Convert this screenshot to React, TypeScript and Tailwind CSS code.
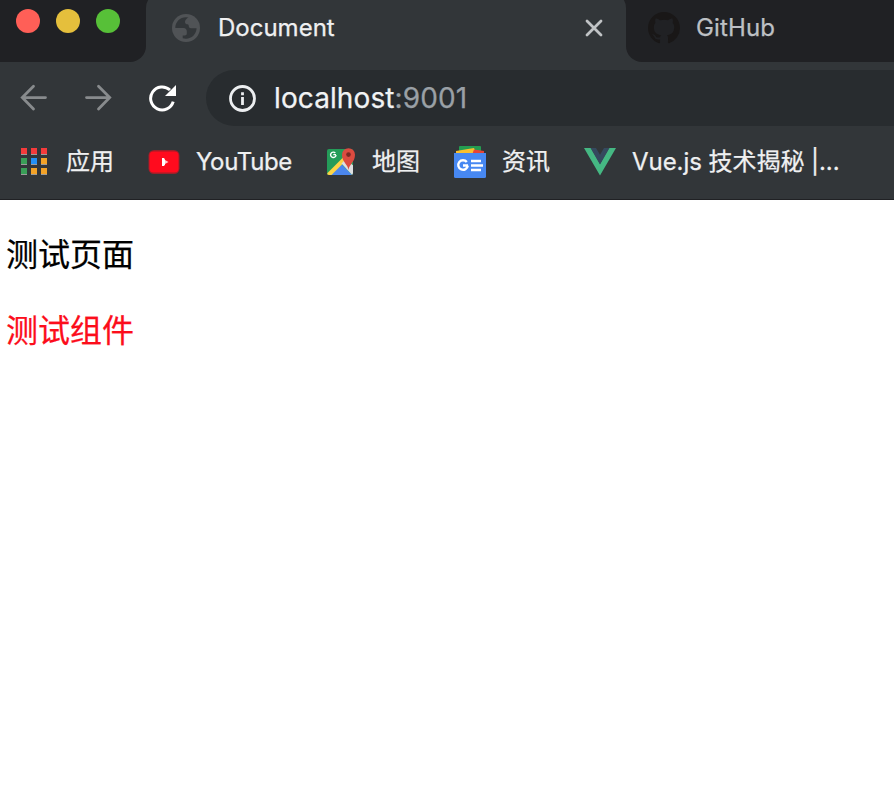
import React from "react";

const TrafficLights = () => (
  <div className="flex h-[62px] w-[146px] shrink-0 gap-4 rounded-br-[16px] bg-[#202124] pl-4 pt-[9px]">
    <span className="size-6 rounded-full bg-[#ff5f57]" />
    <span className="size-6 rounded-full bg-[#e5bf3c]" />
    <span className="size-6 rounded-full bg-[#57c038]" />
  </div>
);

const Globe = () => (
  <svg width="28" height="28" viewBox="0 0 28 28" className="shrink-0">
    <circle cx="14" cy="14" r="14" fill="#505356" />
    <path
      d="M3.300 14C3.300 8 8 3.300 14 3.300L16.500 3.500C14.500 4.500 13 6 13 8c0 1.500 1.200 2.300 2.500 2.300 1 0 1.300 1 1.300 2 0 1.200 1 2 2.200 2h5.600c-.2 5.800-4.800 10.400-10.600 10.400-1.200 0-2.300-.2-3.300-.5v-2.700h2.100c1.200 0 2-.8 2-2v-2.200c0-1.700-1.300-3.300-3.200-3.300z"
      fill="#323639"
    />
  </svg>
);

const GitHubMark = () => (
  <svg width="32" height="32" viewBox="0 0 16 16" className="shrink-0" fill="#191717">
    <path d="M8 0C3.580 0 0 3.580 0 8c0 3.540 2.290 6.530 5.470 7.590.4.070.55-.17.55-.38 0-.19-.01-.82-.01-1.490-2.010.37-2.530-.49-2.690-.94-.09-.23-.48-.94-.82-1.130-.28-.15-.68-.52-.01-.53.63-.01 1.080.58 1.230.82.72 1.210 1.870.87 2.330.66.07-.52.28-.87.51-1.070-1.780-.2-3.640-.89-3.640-3.950 0-.87.31-1.590.82-2.150-.08-.2-.36-1.020.08-2.120 0 0 .67-.21 2.200.82.64-.18 1.320-.27 2-.27s1.360.09 2 .27c1.530-1.040 2.200-.82 2.200-.82.44 1.100.16 1.920.08 2.120.51.56.82 1.270.82 2.150 0 3.070-1.870 3.750-3.650 3.950.29.25.54.73.54 1.480 0 1.070-.01 1.930-.01 2.200 0 .21.15.46.55.38A8.010 8.010 0 0 0 16 8c0-4.420-3.580-8-8-8z" />
  </svg>
);

const YouTubeIcon = () => (
  <svg width="32" height="24" viewBox="0 0 32 24" className="ml-[34px] shrink-0">
    <rect x=".5" width="31" height="24" rx="5.500" fill="#9f1f29" />
    <rect x="1.500" y="1.500" width="29" height="21" rx="4" fill="#ff0b1e" />
    <path d="M14 8h2l1 1.500V14.500L16 16h-2z" fill="#fff" />
    <path d="M17 10l3.500 2-3.500 2z" fill="#ffc9cc" />
  </svg>
);

const MapsIcon = () => (
  <svg width="30" height="32" viewBox="0 0 30 32" className="ml-[34px] shrink-0">
    <defs>
      <clipPath id="map-sheet">
        <rect x="1" y="3" width="26" height="26" rx="2" />
      </clipPath>
    </defs>
    <g clipPath="url(#map-sheet)">
      <rect x="1" y="3" width="26" height="26" fill="#249c59" />
      <path d="M2 31L15 17.500 28 31z" fill="#4b87ee" />
      <path d="M0 28.500L20 8.500l3 3L3.500 31z" fill="#fcd445" />
      <path d="M15.500 17.500l4-4L28 20v11z" fill="#dedfe1" />
    </g>
    <path d="M10 8.600H7.300M9.300 7A2.700 2.700 0 1 0 10 8.900" fill="none" stroke="#fff" strokeWidth="1.400" />
    <path d="M22.500 24c-.6-5.500-6.500-8-6.500-15.300a6.500 6.500 0 0 1 13 0C29 16 23.100 18.500 22.500 24z" fill="#dc4b40" />
    <circle cx="22.500" cy="8.600" r="2.300" fill="#7c2823" />
  </svg>
);

const NewsIcon = () => (
  <svg width="32" height="32" viewBox="0 0 32 32" className="ml-[34px] shrink-0">
    <rect x="5" width="22" height="9" rx="1" fill="#249c50" />
    <path d="M2 5l18-3 3 7H2z" fill="#fbbf2d" />
    <path d="M20 3.500L30 5v4H18z" fill="#e84435" />
    <path d="M0 7h32v23.500a1.500 1.500 0 0 1-1.500 1.500h-29A1.500 1.500 0 0 1 0 30.500z" fill="#4788f2" />
    <path d="M14 19.500H9M12.800 16A4.800 4.800 0 1 0 13.800 19.600" fill="none" stroke="#fff" strokeWidth="2.400" />
    <path d="M17 15h10M17 19.500h12M17 24h10" stroke="#fff" strokeWidth="2.600" />
  </svg>
);

const VueIcon = () => (
  <svg width="32" height="28" viewBox="0 0 32 28" className="ml-[34px] shrink-0">
    <path d="M0 0h7l9 16 9-16h7L16 27.500z" fill="#45b883" />
    <path d="M6.500 0h5.500l4 6.800L20 0h5.500L16 16.500z" fill="#35495e" />
  </svg>
);

const apps = [
  "bg-[#f43b3b]", "bg-[#f43b3b]", "bg-[#f43b3b]",
  "bg-[#3a9f58]", "bg-[#2490f5]", "bg-[#f3a227]",
  "bg-[#3a9f58]", "bg-[#f3a227]", "bg-[#f3a227]",
];

export default function App() {
  return (
    <div className="h-[802px] w-[894px] overflow-hidden bg-white font-['Inter','Noto_Sans_CJK_SC',sans-serif] [-webkit-text-stroke:0.25px]">
      <header className="h-[200px] border-b border-[#202124] bg-[#323639]">
        <div className="flex h-[62px]">
          <TrafficLights />
          <div className="h-[62px] w-[480px] shrink-0 overflow-hidden bg-[#202124]">
            <div className="-mt-2 flex h-[70px] items-center rounded-t-[16px] bg-[#323639] pb-[6px] pl-[26px] pt-2">
              <Globe />
              <span className="ml-[18px] w-[367px] text-2xl text-[#eff0f1]">Document</span>
              <svg width="18" height="18" viewBox="0 0 18 18" stroke="#c0c3c5" strokeWidth="2.800" strokeLinecap="round">
                <path d="M2 2l14 14M16 2L2 16" />
              </svg>
            </div>
          </div>
          <div className="flex h-[62px] flex-1 rounded-bl-[16px] bg-[#202124] pl-[22px]">
            <div className="flex h-14 items-center">
              <GitHubMark />
              <span className="ml-4 text-2xl tracking-[0.15px] text-[#bdc0c4]">GitHub</span>
            </div>
          </div>
        </div>
        <div className="flex h-[72px] items-center pl-5">
          <svg width="28" height="28" viewBox="0 0 28 28" fill="none" stroke="#888b8d" strokeWidth="2.800" strokeLinecap="round">
            <path d="M25.500 13.600H2.800M13.500 2.300L2.300 13.600l11.200 11.300" />
          </svg>
          <svg width="28" height="28" viewBox="0 0 28 28" fill="none" stroke="#888b8d" strokeWidth="2.800" strokeLinecap="round" className="ml-9">
            <path d="M2.500 13.600h22.700M14.500 2.300l11.200 11.300-11.200 11.300" />
          </svg>
          <svg width="28" height="28" viewBox="0 0 28 28" className="ml-9">
            <path d="M25.200 17.600A11.500 11.500 0 1 1 22 6" fill="none" stroke="#fff" strokeWidth="3" />
            <path d="M28 1v11H17z" fill="#fff" />
          </svg>
          <div className="ml-[30px] flex h-14 flex-1 items-center rounded-l-full bg-[#282c2f] pl-[22px]">
            <svg width="28" height="28" viewBox="0 0 28 28" fill="none" stroke="#eceef0">
              <circle cx="14.500" cy="14.500" r="12" strokeWidth="2.800" />
              <path d="M14.500 13v8M14.500 8.200v3" strokeWidth="2.800" />
            </svg>
            <span className="ml-[18px] text-[28px] tracking-[0.1px] text-[#f1f3f4]">
              localhost<span className="text-[#9aa0a6]">:9001</span>
            </span>
          </div>
        </div>
        <div className="flex h-14 items-center text-2xl text-[#eff0f1]">
          <div className="mb-[2px] ml-[21px] grid w-[26px] grid-cols-3 gap-x-1 gap-y-[3px]">
            {apps.map((color, i) => (
              <span key={i} className={"h-[7px] w-[6px] border-b border-[#9b9b9b] " + color} />
            ))}
          </div>
          <span className="ml-[19px] w-12 whitespace-nowrap">应用</span>
          <YouTubeIcon />
          <span className="ml-4 w-24 whitespace-nowrap tracking-[-0.35px]">YouTube</span>
          <MapsIcon />
          <span className="ml-[16px] w-12 whitespace-nowrap">地图</span>
          <NewsIcon />
          <span className="ml-4 w-12 whitespace-nowrap">资讯</span>
          <VueIcon />
          <span className="ml-4 whitespace-nowrap tracking-[-0.05px]">Vue.js 技术揭秘 |...</span>
        </div>
      </header>
      <main className="px-[6px] pt-[31px] text-[32px] leading-[48px]">
        <p className="text-black">测试页面</p>
        <p className="mt-7 text-[#fc0d1b]">测试组件</p>
      </main>
    </div>
  );
}
